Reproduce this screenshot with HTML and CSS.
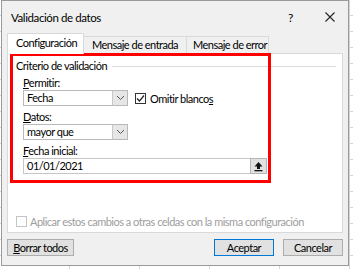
FILE: index.html
```html
<!DOCTYPE html>
<html lang="es">
<head>
<meta charset="utf-8">
<title>Validación de datos</title>
<link rel="stylesheet" href="styles.css">
</head>
<body>
<div class="dialog">
  <div class="titlebar">
    <span class="title">Validación de datos</span>
    <span class="help">?</span>
    <span class="close">
      <svg width="10" height="10" viewBox="0 0 10 10"><path d="M0.5 0.5 L9.5 9.5 M9.5 0.5 L0.5 9.5" stroke="#222" stroke-width="1.1" fill="none"/></svg>
    </span>
  </div>
  <div class="tabs">
    <div class="tab active">Configuración</div>
    <div class="tab t2">Mensaje de entrada</div>
    <div class="tab t3">Mensaje de error</div>
  </div>
  <div class="panel">
    <div class="group-head">
      <span class="group-label">Criterio de validación</span>
      <span class="group-line"></span>
    </div>
    <div class="group-body">
      <div class="label lbl1"><u>P</u>ermitir:</div>
      <div class="row">
        <div class="select">
          <span class="select-text">Fecha</span>
          <span class="drop"><svg width="9" height="6" viewBox="0 0 9 6"><path d="M1 1 L4.5 4.5 L8 1" stroke="#555" stroke-width="1" fill="none"/></svg></span>
        </div>
        <label class="check">
          <span class="box"><svg width="11" height="11" viewBox="0 0 11 11"><path d="M2 5.5 L4.5 8 L9 2.5" stroke="#222" stroke-width="1.2" fill="none"/></svg></span>
          <span>Omitir blanco<u>s</u></span>
        </label>
      </div>
      <div class="label lbl2"><u>D</u>atos:</div>
      <div class="select">
        <span class="select-text">mayor que</span>
        <span class="drop"><svg width="9" height="6" viewBox="0 0 9 6"><path d="M1 1 L4.5 4.5 L8 1" stroke="#555" stroke-width="1" fill="none"/></svg></span>
      </div>
      <div class="label lbl3"><u>F</u>echa inicial:</div>
      <div class="input">
        <span class="input-text">01/01/2021</span>
        <span class="ref-btn"><svg width="11" height="11" viewBox="0 0 11 11"><path d="M5.5 1 L9.5 5.5 L7 5.5 L7 8 L4 8 L4 5.5 L1.5 5.5 Z" fill="#111"/><rect x="1.5" y="9" width="8" height="1.3" fill="#111"/></svg></span>
      </div>
    </div>
    <div class="apply">
      <span class="box disabled"></span>
      <span class="apply-text">Aplicar estos cambios a otras celdas con la misma configuración</span>
    </div>
    <div class="highlight"></div>
  </div>
  <div class="buttons">
    <button class="btn clear"><u>B</u>orrar todos</button>
    <span class="spacer"></span>
    <button class="btn ok">Aceptar</button>
    <button class="btn cancel">Cancelar</button>
  </div>
</div>
</body>
</html>
```
FILE: styles.css
```css
* { box-sizing: border-box; }
html, body { margin: 0; padding: 0; }
body {
  width: 353px;
  height: 269px;
  overflow: hidden;
  background-color: #ffffff;
  background-image:
    repeating-linear-gradient(to right, transparent 0 69px, #d4d4d4 69px 70px, transparent 70px 66.7px),
    repeating-linear-gradient(to bottom, transparent 0 15px, #d4d4d4 15px 16px);
  font-family: Lato, "Noto Sans", sans-serif;
  font-size: 11px;
  letter-spacing: -0.5px;
  color: #000;
  white-space: nowrap;
}
.dialog {
  margin-left: 1px;
  width: 348px;
  height: 266px;
  background: #f0f0f0;
  border: 1px solid #9a9a9a;
  display: flex;
  flex-direction: column;
}
.titlebar {
  height: 32px;
  display: flex;
  align-items: center;
  padding-left: 9px;
  flex: none;
}
.title { font-size: 11.5px; letter-spacing: -0.4px; flex: 1; }
.help { font-size: 12px; width: 5px; margin-right: 32px; letter-spacing: 0; }
.close { width: 10px; display: flex; margin-right: 13px; }
.tabs {
  display: flex;
  align-items: flex-end;
  padding-left: 5px;
  height: 20px;
  flex: none;
  position: relative;
  z-index: 1;
}
.tab {
  height: 17px;
  border: 1px solid #d9d9d9;
  border-bottom: none;
  background: #f0f0f0;
  line-height: 15px;
  padding: 0 0 0 8px;
}
.tab.active {
  width: 77px;
  background: #fff;
  line-height: 18px;
  padding-left: 8px;
  margin-bottom: -1px;
  height: 21px;
}
.t2 { width: 103px; border-left: none; }
.t3 { width: 82px; border-left: none; padding-left: 6px; }
.panel {
  position: relative;
  margin-left: 5px;
  width: 336px;
  height: 180px;
  background: #fff;
  border: 1px solid #d9d9d9;
  padding: 5px 0 0 8px;
  flex: none;
}
.group-head {
  display: flex;
  align-items: center;
  height: 14px;
}
.group-label { line-height: 14px; }
.group-line {
  flex: 1;
  height: 1px;
  background: #dcdcdc;
  margin: 0 6px 0 5px;
}
.group-body { padding-left: 7px; }
.label { line-height: 14px; }
.lbl1 { margin-top: 3px; }
.lbl2, .lbl3 { margin-top: 4px; }
.row { display: flex; align-items: center; }
.select {
  width: 105px;
  height: 16px;
  border: 1px solid #b9b9b9;
  background: #fff;
  display: flex;
  align-items: center;
}
.select-text { flex: 1; padding-left: 3px; line-height: 14px; }
.drop {
  width: 15px;
  height: 14px;
  background: #e6e6e6;
  border-left: 1px solid #c8c8c8;
  display: flex;
  align-items: center;
  justify-content: center;
}
.check {
  display: flex;
  align-items: center;
  margin-left: 7px;
  gap: 4px;
}
.box {
  width: 11px;
  height: 11px;
  border: 1px solid #333;
  background: #fff;
  display: flex;
  align-items: center;
  justify-content: center;
}
.box svg { flex: none; }
.input {
  width: 244px;
  height: 16px;
  border: 1px solid #c6c6c6;
  background: #fff;
  display: flex;
  align-items: center;
}
.input-text { flex: 1; padding-left: 3px; line-height: 14px; }
.ref-btn {
  width: 17px;
  height: 16px;
  margin-right: -1px;
  border: 1px solid #b5b5b5;
  background: #e1e1e1;
  display: flex;
  align-items: center;
  justify-content: center;
}
.apply {
  margin-top: 41px;
  display: flex;
  align-items: center;
  gap: 3px;
}
.box.disabled { border-color: #c4c4c4; }
.apply-text { color: #9d9d9d; }
.highlight {
  position: absolute;
  left: 2px;
  top: -1px;
  width: 261px;
  height: 130px;
  border: 3px solid #ff0000;
  pointer-events: none;
}
.buttons {
  display: flex;
  padding: 6px 0 0 5px;
  width: 341px;
}
.spacer { flex: 1; }
.btn {
  height: 17px;
  border: 1px solid #adadad;
  background: #e1e1e1;
  font: inherit;
  letter-spacing: inherit;
  color: #000;
  padding: 0;
  line-height: 15px;
}
.clear { width: 67px; }
.ok { width: 60px; border-color: #0078d7; }
.cancel { width: 60px; margin-left: 9px; }
```
